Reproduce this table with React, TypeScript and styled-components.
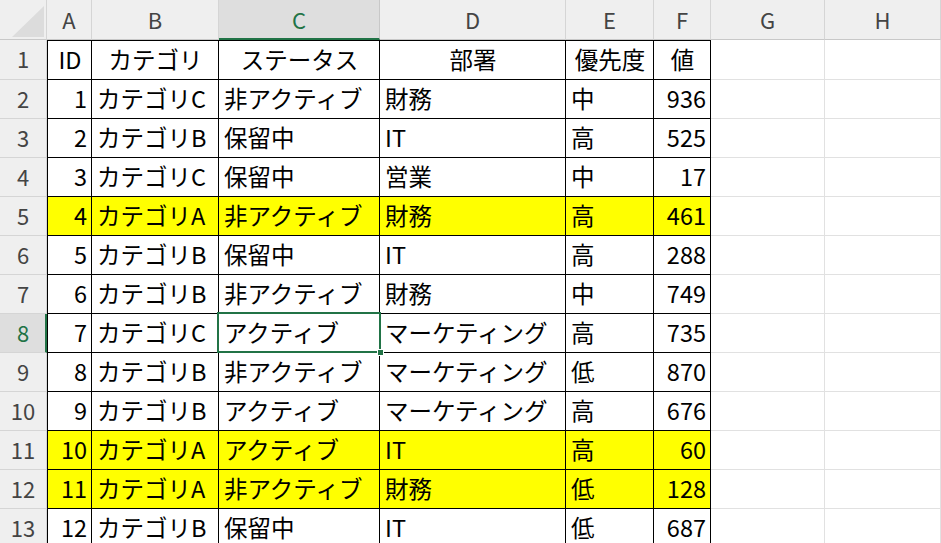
import React from "react";
import styled, { createGlobalStyle, css } from "styled-components";

const GlobalStyle = createGlobalStyle`
  html, body {
    margin: 0;
    padding: 0;
    background: #ffffff;
    overflow: hidden;
  }
  body {
    font-family: "Noto Sans CJK JP", "Noto Sans", sans-serif;
  }
`;

const GREEN = "#217346";
const GRID = "#e1e1e1";
const HEAD_LINE = "#d5d5d5";

const Sheet = styled.div`
  width: 941px;
  height: 543px;
  overflow: hidden;
  display: grid;
  grid-template-columns: 47px 45px 127px 161px 186px 88px 57px 114px 116px;
  grid-template-rows: 40px 40px repeat(12, 39px);
  font-family: "Noto Sans CJK JP", "Noto Sans", sans-serif;
  font-size: 23.5px;
  color: #000;
`;

const Corner = styled.div`
  box-sizing: border-box;
  background: #efefef;
  border-right: 1px solid ${HEAD_LINE};
  border-bottom: 1px solid #c8c8c8;
  display: flex;
  align-items: flex-end;
  justify-content: flex-end;
  padding: 0 2px 2px 0;
`;

const CornerTriangle = styled.div`
  width: 32px;
  height: 31px;
  background: #dcdcdc;
  clip-path: polygon(100% 0, 100% 100%, 0 100%);
`;

const ColHead = styled.div<{ $selected?: boolean }>`
  box-sizing: border-box;
  background: #efefef;
  border-right: 1px solid ${HEAD_LINE};
  border-bottom: 1px solid #c8c8c8;
  display: flex;
  align-items: center;
  justify-content: center;
  color: #444444;
  font-size: 22px;
  padding-bottom: 1px;
  ${(p) =>
    p.$selected &&
    css`
      background: #dedede;
      color: ${GREEN};
      border-bottom: 2px solid ${GREEN};
      border-right-color: #c8c8c8;
      padding-bottom: 0;
    `}
`;

const RowHead = styled.div<{ $selected?: boolean }>`
  box-sizing: border-box;
  background: #efefef;
  border-right: 1px solid ${HEAD_LINE};
  border-bottom: 1px solid ${HEAD_LINE};
  display: flex;
  align-items: center;
  justify-content: center;
  color: #444444;
  font-size: 22px;
  padding-bottom: 3px;
  ${(p) =>
    p.$selected &&
    css`
      background: #dedede;
      color: ${GREEN};
      border-right: 2px solid ${GREEN};
      padding-left: 1px;
    `}
`;

const Cell = styled.div<{
  $data?: boolean;
  $align?: "left" | "right" | "center";
  $yellow?: boolean;
  $firstRow?: boolean;
  $firstCol?: boolean;
}>`
  position: relative;
  box-sizing: border-box;
  display: flex;
  align-items: center;
  white-space: nowrap;
  padding: 0 4px 3px 5px;
  border-right: 1px solid ${GRID};
  border-bottom: 1px solid ${GRID};
  justify-content: ${(p) =>
    p.$align === "right" ? "flex-end" : p.$align === "center" ? "center" : "flex-start"};
  background: ${(p) => (p.$yellow ? "#ffff00" : "#ffffff")};
  ${(p) =>
    p.$data &&
    css`
      border-right-color: #000;
      border-bottom-color: #000;
    `}
  ${(p) =>
    p.$firstRow &&
    css`
      border-top: 1px solid #000;
    `}
  ${(p) =>
    p.$firstCol &&
    css`
      border-left: 1px solid #000;
      padding-right: 4px;
    `}
`;

const Selection = styled.div`
  position: absolute;
  top: -2px;
  left: -2px;
  right: -2px;
  bottom: -1px;
  border: 2px solid ${GREEN};
  pointer-events: none;
  z-index: 2;
`;

const FillHandle = styled.div`
  position: absolute;
  right: -4px;
  bottom: -4px;
  width: 5px;
  height: 5px;
  background: ${GREEN};
  outline: 1px solid #ffffff;
`;

type Row = [number, string, string, string, string, number];

const rows: Row[] = [
  [1, "カテゴリC", "非アクティブ", "財務", "中", 936],
  [2, "カテゴリB", "保留中", "IT", "高", 525],
  [3, "カテゴリC", "保留中", "営業", "中", 17],
  [4, "カテゴリA", "非アクティブ", "財務", "高", 461],
  [5, "カテゴリB", "保留中", "IT", "高", 288],
  [6, "カテゴリB", "非アクティブ", "財務", "中", 749],
  [7, "カテゴリC", "アクティブ", "マーケティング", "高", 735],
  [8, "カテゴリB", "非アクティブ", "マーケティング", "低", 870],
  [9, "カテゴリB", "アクティブ", "マーケティング", "高", 676],
  [10, "カテゴリA", "アクティブ", "IT", "高", 60],
  [11, "カテゴリA", "非アクティブ", "財務", "低", 128],
  [12, "カテゴリB", "保留中", "IT", "低", 687],
];

const columns = ["A", "B", "C", "D", "E", "F", "G", "H"];
const headers = ["ID", "カテゴリ", "ステータス", "部署", "優先度", "値"];
const SELECTED_COL = 2; // C
const SELECTED_ROW = 8;

export default function App() {
  return (
    <>
      <GlobalStyle />
      <Sheet>
        <Corner>
          <CornerTriangle />
        </Corner>
        {columns.map((c, i) => (
          <ColHead key={c} $selected={i === SELECTED_COL}>
            {c}
          </ColHead>
        ))}

        <RowHead>1</RowHead>
        {headers.map((h, i) => (
          <Cell key={h} $data $firstRow $firstCol={i === 0} $align="center">
            {h}
          </Cell>
        ))}
        <Cell />
        <Cell />

        {rows.map((r, ri) => {
          const rowNum = ri + 2;
          const yellow = r[0] === 4 || r[0] === 10 || r[0] === 11;
          return (
            <React.Fragment key={rowNum}>
              <RowHead $selected={rowNum === SELECTED_ROW}>{rowNum}</RowHead>
              {r.map((v, ci) => (
                <Cell
                  key={ci}
                  $data
                  $firstCol={ci === 0}
                  $yellow={yellow}
                  $align={typeof v === "number" ? "right" : "left"}
                >
                  {v}
                  {rowNum === SELECTED_ROW && ci === SELECTED_COL && (
                    <Selection>
                      <FillHandle />
                    </Selection>
                  )}
                </Cell>
              ))}
              <Cell />
              <Cell />
            </React.Fragment>
          );
        })}
      </Sheet>
    </>
  );
}
